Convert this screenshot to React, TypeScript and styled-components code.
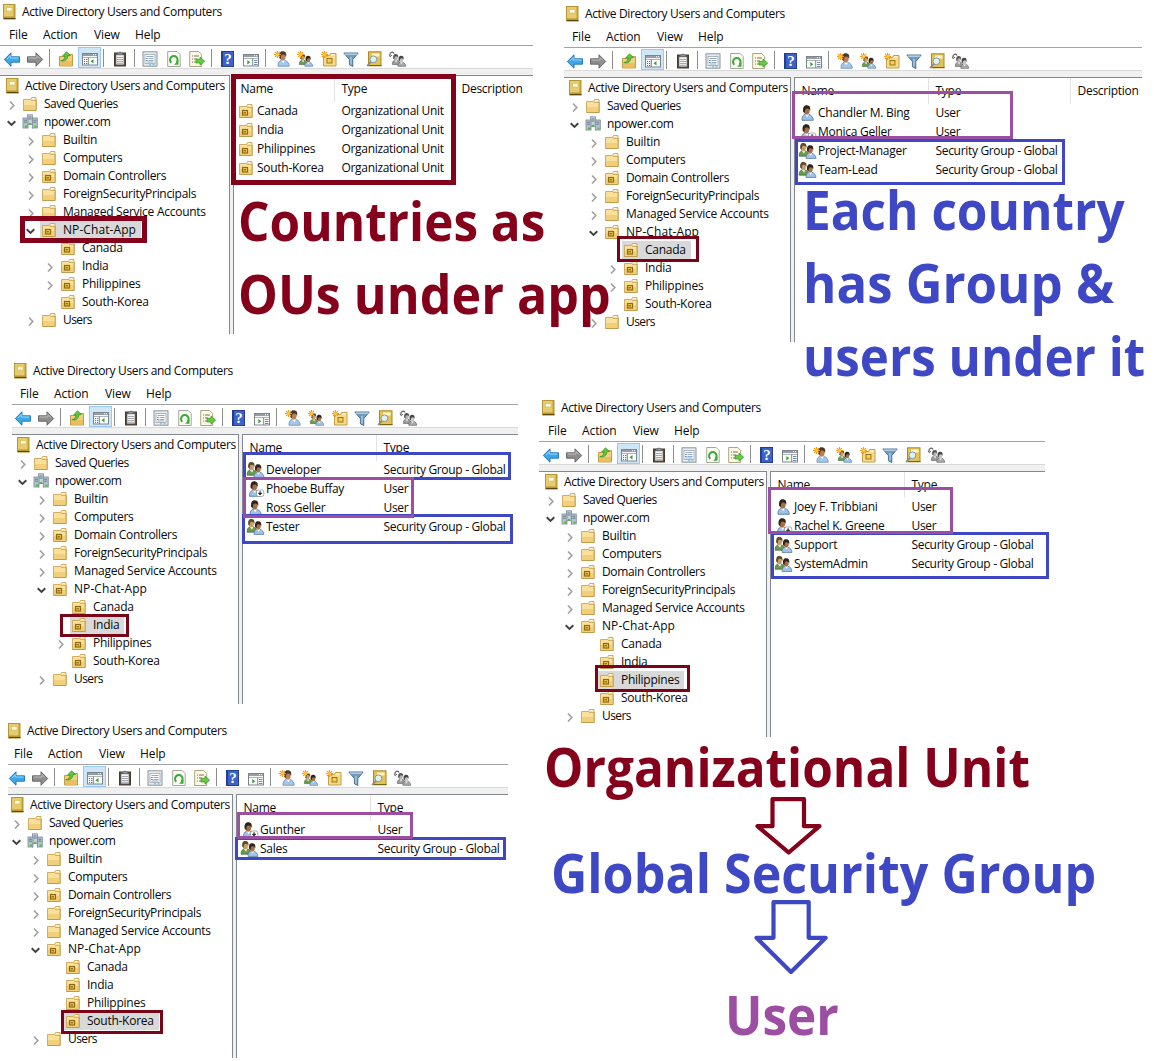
import React, { useLayoutEffect, useRef, useState } from "react";
import styled, { createGlobalStyle } from "styled-components";

const MAROON = "#85001a";
const DARK_RED = "#7a0519";
const BLUE = "#3f48c4";
const PURPLE = "#9c4fa2";

const GlobalStyle = createGlobalStyle`
  body {
    margin: 0;
    background: #ffffff;
  }
`;

const Board = styled.main`
  position: relative;
  width: 1154px;
  height: 1061px;
  overflow: hidden;
  background: #ffffff;
  color: #080808;
  font-family: "Open Sans", "Noto Sans", sans-serif;
  font-size: 12px;
  letter-spacing: -0.27px;
`;

/* ---------- icons ---------- */

const Svg = styled.svg<{ $w?: number; $h?: number }>`
  display: block;
  flex: none;
  overflow: visible;
  width: ${(p) => p.$w ?? 16}px;
  height: ${(p) => p.$h ?? 16}px;
`;

const BookIcon = () => (
  <Svg $w={14} $h={16} viewBox="0 0 14 16">
    <rect x="0.5" y="0.5" width="11.500" height="14.500" fill="#c9a227" stroke="#b5973a" />
    <rect x="1" y="1" width="9.500" height="12" fill="#e6cc70" />
    <rect x="3.500" y="3.500" width="5.500" height="3.500" fill="#fffbe4" stroke="#d8b850" strokeWidth=".6" />
    <path d="M1 14.500h11.500" stroke="#5d4810" strokeWidth="1.200" />
    <path d="M1 13h10" stroke="#b7952a" />
  </Svg>
);

const FolderShape = () => (
  <>
    <path d="M1.500 3.500h7l1-2h4.500v13h-12.500z" fill="#f3d387" stroke="#cda75a" strokeWidth=".9" />
    <path d="M2 4h7.500l1-1.300h3v11H2z" fill="#fae09a" />
    <path d="M2 9h12v5H2z" fill="#f2cf7b" />
    <path d="M9.800 2.500h2.800" stroke="#fff" />
    <path d="M9 4.500h5" stroke="#c9a458" strokeWidth=".8" />
    <path d="M1.500 14.500H14.200V4" fill="none" stroke="#c0974a" strokeWidth=".9" />
  </>
);

const FolderIcon = () => (
  <Svg viewBox="0 0 16 16">
    <FolderShape />
  </Svg>
);

const OuIcon = () => (
  <Svg viewBox="0 0 16 16">
    <FolderShape />
    <rect x="4.500" y="7.500" width="5" height="4.500" fill="#f0c94c" stroke="#8d6a14" strokeWidth="1.200" />
    <path d="M5.500 9.800h2.500" stroke="#80600f" strokeWidth="1.200" />
  </Svg>
);

const DomainIcon = () => (
  <Svg viewBox="0 0 16 16">
    <rect x="5.500" y="0.800" width="5" height="9.500" fill="#c3d0d8" stroke="#7a8d98" strokeWidth=".8" />
    <rect x="1" y="4" width="5" height="10" fill="#b4c4ce" stroke="#788b97" strokeWidth=".8" />
    <rect x="10.300" y="4" width="5" height="10" fill="#b4c4ce" stroke="#788b97" strokeWidth=".8" />
    <path d="M6.500 3h3M6.500 5h3M2 6.200h3M2 8.200h3M11.300 6.200h3M11.300 8.200h3" stroke="#5f7380" strokeWidth=".9" />
    <path d="M5.500 14.500v-4h5v4" fill="none" stroke="#8a9aa3" />
    <path d="M3 11.500h2v2H3zM7 9h2v2H7zM12.500 11.500h2v2h-2z" fill="#4dbd3a" />
  </Svg>
);

const Person = ({ skin = "#a56f45", hair = "#30231b", body = "#9fc3e6", edge = "#4d7298" }) => (
  <>
    <path d="M3 15.300c-.3-3 1-5.500 3-6h3.500c3 .6 5 3.500 4.700 6z" fill={body} stroke={edge} strokeWidth=".8" />
    <path d="M6 9.300l2.500 3 1.300-3z" fill="#f5f9fd" />
    <ellipse cx="7.700" cy="5.800" rx="2.900" ry="3.800" fill={skin} />
    <path d="M4.200 7C3.500 2.500 5 .3 7.500.3c3.200 0 4.300 2 3.600 6-.5-1.800-1.200-2.600-2.700-2.700-1.800-.1-2.600 1-2.500 4.400z" fill={hair} />
  </>
);

const UserIcon = () => (
  <Svg viewBox="0 0 16 16">
    <g transform="translate(-1 0)">
      <Person />
    </g>
  </Svg>
);

const DisabledUserIcon = () => (
  <Svg viewBox="0 0 16 16">
    <g transform="translate(-1.500 0)">
      <Person />
    </g>
    <rect x="8.500" y="9" width="7.300" height="6.500" rx="2" fill="#fff" stroke="#8c99a6" strokeWidth=".8" />
    <path d="M12.100 10v3M10.500 12.200l1.600 1.800 1.600-1.800z" fill="#222" stroke="#222" strokeWidth=".9" />
  </Svg>
);

const GroupShape = ({ gray = false }) => (
  <>
    <g transform="translate(-3.400 -.3) scale(.88)">
      {gray ? (
        <Person skin="#b5b5b5" hair="#555" body="#9c9c9c" edge="#555" />
      ) : (
        <Person skin="#c99c6c" hair="#5d4c25" body="#6a9c4c" edge="#36602a" />
      )}
    </g>
    <g transform="translate(3.400 2) scale(.88)">
      {gray ? <Person skin="#c5c5c5" hair="#444" body="#a9a9a9" edge="#555" /> : <Person />}
    </g>
  </>
);

const GroupIcon = () => (
  <Svg viewBox="0 0 16 16">
    <GroupShape />
  </Svg>
);

const Spark = () => (
  <>
    <path d="M3.500 0v7M0 3.500h7M1 1l5 5M6 1L1 6" stroke="#f0a020" strokeWidth="1.100" />
    <circle cx="3.500" cy="3.500" r="1.500" fill="#ffc63c" />
  </>
);

const NewUserIcon = () => (
  <Svg viewBox="0 0 16 16">
    <g transform="translate(1 0)">
      <Person skin="#b98052" hair="#4a382b" body="#a4c6e8" edge="#6a90b8" />
    </g>
    <Spark />
  </Svg>
);

const NewGroupIcon = () => (
  <Svg viewBox="0 0 16 16">
    <g transform="translate(3 3) scale(.8)">
      <GroupShape />
    </g>
    <Spark />
  </Svg>
);

const NewOuIcon = () => (
  <Svg viewBox="0 0 16 16">
    <path d="M2.500 4.500h6l1-2h5.500v12.500h-12.500z" fill="#f6d98b" stroke="#c69f45" />
    <rect x="6" y="7.500" width="5" height="4.500" fill="#f4d04a" stroke="#9a7620" />
    <path d="M10 4h4" stroke="#fff" />
    <Spark />
  </Svg>
);

const BackIcon = () => (
  <Svg viewBox="0 0 16 16">
    <path d="M.3 8.500L7 1.800v4h8.500v5.400H7v4z" fill="#3da7e8" stroke="#1b70b4" strokeWidth=".9" strokeLinejoin="round" />
    <path d="M3 8L6.300 4.500v2.500h8.200" fill="none" stroke="#96d8fb" />
  </Svg>
);

const ForwardIcon = () => (
  <Svg viewBox="0 0 16 16">
    <path d="M15.700 8.500L9 1.800v4H.5v5.400H9v4z" fill="#8e8e8e" stroke="#5e5e5e" strokeWidth=".9" strokeLinejoin="round" />
    <path d="M1.500 7H10V4.500L13 7.500" fill="none" stroke="#bdbdbd" />
  </Svg>
);

const UpFolderIcon = () => (
  <Svg viewBox="0 0 16 16">
    <path d="M1.500 5.500h7l1-2h5v11.500h-13z" fill="#f2d07e" stroke="#c39d45" />
    <path d="M2 10h12v4.500H2z" fill="#e9bf62" />
    <path d="M2.800 9.500C5.500 9.500 6.800 7.800 7 5H4.600L8.500.8l4 3.700-2.600.2C9.800 8.500 6.500 11 2.800 9.500z" fill="#5cc63c" stroke="#338f1f" strokeWidth=".7" />
  </Svg>
);

const PaneShape = () => (
  <>
    <rect x=".5" y="2.500" width="15" height="11.500" fill="#fff" stroke="#7d858c" />
    <path d="M1 4h14" stroke="#969da3" strokeWidth="2" />
    <path d="M11 3.700h1M13 3.700h1" stroke="#fff" />
    <path d="M1 6.400h14" stroke="#8e969c" strokeWidth=".8" />
  </>
);

const TreePaneIcon = () => (
  <Svg viewBox="0 -1 16 16">
    <PaneShape />
    <path d="M6.300 6.500V14" stroke="#7d858c" />
    <path d="M2 8.500h1M2 10.500h1M2 12.500h1M4 8.500h1.300M4 10.500h1.300M4 12.500h1.300" stroke="#5576a0" />
    <path d="M11.500 8v4.600L8.500 10.300z" fill="#35a332" />
  </Svg>
);

const ActionPaneIcon = () => (
  <Svg viewBox="0 -1 16 16">
    <PaneShape />
    <path d="M9.700 6.500V14" stroke="#7d858c" />
    <path d="M11 8.500h3.500M11 10.500h3.500M11 12.500h3.500" stroke="#6c8bb0" />
    <path d="M4.300 8v4.600l3-2.300z" fill="#35a332" />
  </Svg>
);

const ClipboardIcon = () => (
  <Svg viewBox="0 0 16 16">
    <rect x="2.500" y="2" width="11" height="13" fill="#5b5048" stroke="#463c36" />
    <rect x="4.300" y="4" width="7.400" height="9.500" fill="#f4f4f4" />
    <path d="M5 6.500h6M5 8.500h6M5 10.500h6M5 12.300h6" stroke="#9aa0a4" strokeWidth=".9" />
    <path d="M5 3.800V2h1.800c.3-1.500 2.100-1.500 2.400 0H11v1.800z" fill="#8f969b" stroke="#55595d" strokeWidth=".6" />
  </Svg>
);

const PropertiesIcon = () => (
  <Svg viewBox="0 0 16 16">
    <rect x="1" y=".8" width="14" height="14.400" fill="#e8ecef" stroke="#8b949b" />
    <rect x="3" y="3.500" width="10" height="9" fill="#fff" stroke="#9aa8b3" strokeWidth=".8" />
    <path d="M4.500 5.500h7M6.500 7.500h5M6.500 9.500h5M4.500 11h7" stroke="#7393b5" strokeWidth=".8" />
    <path d="M4.300 7.500h1.200M4.300 9.500h1.200" stroke="#2f5c95" />
    <path d="M7 13.800h2M10.500 13.800h2" stroke="#55b9df" />
  </Svg>
);

const RefreshIcon = () => (
  <Svg viewBox="0 0 16 16">
    <path d="M1.700.5h9.500l3 3v12H1.700z" fill="#fcfcf7" stroke="#9c9c90" strokeWidth=".9" />
    <path d="M10.300 11.700a3.800 3.800 0 1 0-5 0" fill="none" stroke="#3caa37" strokeWidth="2" />
    <path d="M12.500 9.500v4.300H8z" fill="#3caa37" />
  </Svg>
);

const ExportIcon = () => (
  <Svg viewBox="0 0 16 16">
    <path d="M.7.500h9l3 3v12H.7z" fill="#fbf8e6" stroke="#a39b78" strokeWidth=".9" />
    <path d="M3 5h1M3 8h1M3 11h1M5 5h5M5 8h3M5 11h3" stroke="#77745f" />
    <path d="M7 8.300h4V6l4.700 4.200L11 14.200V12H7z" fill="#63cc42" stroke="#37951f" strokeWidth=".7" />
  </Svg>
);

const HelpBook = styled.span`
  display: flex;
  align-items: center;
  justify-content: center;
  width: 13px;
  height: 16px;
  margin: 0 1px 0 2px;
  box-sizing: border-box;
  border: 1px solid #24408c;
  border-left-width: 2px;
  background: #3d62cc;
  color: #fff;
  font: bold 15px/14px "Liberation Serif", serif;
  letter-spacing: 0;
`;

const FunnelIcon = () => (
  <Svg viewBox="0 0 16 16">
    <path d="M.8 2h14.400L9.800 8.500v7l-3.400-1.700V8.500z" fill="#6f9cc0" stroke="#44698a" strokeWidth=".9" />
    <path d="M1.500 2.400h13l-1 1.300h-11z" fill="#c6dcec" />
    <path d="M8 6v7.500" stroke="#b8d4e8" strokeWidth="1.200" />
  </Svg>
);

const FindIcon = () => (
  <Svg viewBox="0 0 16 16">
    <rect x="2.500" y=".8" width="12.500" height="14" fill="#e3c353" stroke="#ab8a22" />
    <rect x="6" y="2.500" width="7.500" height="3" fill="#fff6ce" />
    <path d="M3 14.500h12.500" stroke="#7f6310" />
    <circle cx="7.400" cy="8.300" r="3.400" fill="#e0f0f8" stroke="#8198a6" />
    <path d="M5 10.800L1 15" stroke="#8b8b8b" strokeWidth="1.800" />
  </Svg>
);

const MembersIcon = () => (
  <Svg viewBox="0 0 16 16">
    <g transform="translate(4 3) scale(.8)">
      <GroupShape gray />
    </g>
    <path d="M1 4.500C.5 1 4 0 5 2.500" fill="none" stroke="#555" strokeWidth="1.100" />
    <path d="M.2 3.500l1 2.300L3 4" fill="none" stroke="#555" strokeWidth=".9" />
  </Svg>
);

const Chevron = ({ open }: { open?: boolean }) => (
  <Svg $w={11} $h={11} viewBox="0 -1 11 11">
    {open ? (
      <path d="M1.700 3.300L5.500 7l3.800-3.700" fill="none" stroke="#404040" strokeWidth="1.900" />
    ) : (
      <path d="M4 1.500l3.800 4L4 9.500" fill="none" stroke="#a2a2a2" strokeWidth="1.700" />
    )}
  </Svg>
);

/* ---------- console window ---------- */

const ConsoleFrame = styled.section<{ $x: number; $y: number; $w: number; $h: number }>`
  position: absolute;
  left: ${(p) => p.$x}px;
  top: ${(p) => p.$y}px;
  width: ${(p) => p.$w}px;
  height: ${(p) => p.$h}px;
  display: flex;
  flex-direction: column;
  white-space: nowrap;
`;

const TitleBar = styled.header`
  display: flex;
  align-items: center;
  gap: 5px;
  height: 24px;
  padding-left: 3px;
  flex: none;
`;

const ConsoleTitle = styled.span<{ $indent?: number }>`
  padding-left: ${(p) => p.$indent ?? 0}px;
  padding-bottom: 1px;
  letter-spacing: -0.36px;
`;

const MenuBar = styled.nav`
  display: grid;
  grid-template-columns: 34px 51px 41px 40px;
  align-items: center;
  box-sizing: border-box;
  height: 21px;
  padding: 0 0 1px 9px;
  flex: none;
  letter-spacing: -0.1px;
`;

const ToolBar = styled.div<{ $inset: number }>`
  display: flex;
  align-items: center;
  box-sizing: border-box;
  height: 24px;
  flex: none;
  margin-left: ${(p) => p.$inset}px;
  padding: 1px 0 0 ${(p) => 4 - p.$inset}px;
  border-top: 1px solid #a3a3a3;
  border-bottom: 1px solid #d9d9d9;
`;

const Tool = styled.span<{ $gap: number }>`
  display: flex;
  width: 16px;
  margin: 2px 0 0 ${(p) => p.$gap}px;
  flex: none;
`;

const ActiveTool = styled.span`
  display: flex;
  align-items: center;
  justify-content: center;
  box-sizing: border-box;
  width: 23px;
  height: 21px;
  padding-top: 1px;
  margin-left: 4px;
  border: 1px solid #99cbf2;
  background: #cfe6f9;
  flex: none;
`;

const Divider = styled.i<{ $gap: number }>`
  width: 1px;
  height: 18px;
  margin: 1px 0 0 ${(p) => p.$gap}px;
  background: #8d8d8d;
  flex: none;
`;

const Body = styled.div<{ $inset: number }>`
  display: flex;
  flex: 1;
  min-height: 0;
  margin-left: ${(p) => p.$inset}px;
  border-top: 6px solid #f0f0f0;
`;

const TreePane = styled.div<{ $w: number }>`
  box-sizing: border-box;
  width: ${(p) => p.$w}px;
  flex: none;
  padding-top: 1px;
  border-top: 1px solid #828790;
  border-right: 1px solid #828790;
`;

const Splitter = styled.div`
  width: 3px;
  flex: none;
  background: #f0f0f0;
`;

const ListPane = styled.div`
  flex: 1;
  min-width: 0;
  border-top: 1px solid #828790;
  border-left: 1px solid #828790;
`;

const TreeRow = styled.div<{ $pad: number }>`
  display: flex;
  align-items: center;
  height: 18px;
  padding-left: ${(p) => p.$pad}px;
`;

const ExpanderSlot = styled.span`
  width: 15px;
  flex: none;
`;

const NodeBox = styled.span<{ $selected?: boolean }>`
  display: flex;
  align-items: center;
  gap: 6px;
  height: 18px;
  padding: 0 5px 0 1px;
  background: ${(p) => (p.$selected ? "#d9d9d9" : "transparent")};
`;

const NodeLabel = styled.span<{ $tracking?: number }>`
  padding-bottom: 1px;
  letter-spacing: ${(p) => p.$tracking ?? -0.26}px;
`;

const ListHeader = styled.div<{ $cols: string }>`
  display: grid;
  grid-template-columns: ${(p) => p.$cols};
  height: 25px;
  line-height: 26px;
`;

const HeaderCell = styled.span<{ $last?: boolean }>`
  padding-left: 6.5px;
  border-right: ${(p) => (p.$last ? "0" : "1px solid #e2e2e2")};
`;

const ListRow = styled.div<{ $cols: string }>`
  display: grid;
  grid-template-columns: ${(p) => p.$cols};
  align-items: center;
  height: 19px;
`;

const NameCell = styled.span<{ $tight?: boolean }>`
  display: flex;
  align-items: center;
  gap: ${(p) => (p.$tight ? 2 : 3)}px;
  padding-left: ${(p) => (p.$tight ? 5 : 4)}px;
`;

const TypeCell = styled.span`
  padding-left: 6.5px;
  letter-spacing: -0.32px;
`;

type Kind = "ou" | "user" | "disabled" | "group";
type Entry = [Kind, string];

interface ConsoleData {
  x: number;
  y: number;
  w: number;
  h: number;
  inset: number;
  tree: number;
  nameCol: number;
  typeCol: number;
  description?: boolean;
  selected: string;
  expandable: string[];
  entries: Entry[];
}

const typeNames: Record<Kind, string> = {
  ou: "Organizational Unit",
  user: "User",
  disabled: "User",
  group: "Security Group - Global",
};

const kindIcons: Record<Kind, React.ReactNode> = {
  ou: <OuIcon />,
  user: <UserIcon />,
  disabled: <DisabledUserIcon />,
  group: <GroupIcon />,
};

type Node = {
  label: string;
  level: number;
  icon: React.ReactNode;
  state?: "open" | "closed";
  tracking?: number;
};

const buildTree = (expandable: string[]): Node[] => [
  { label: "Saved Queries", level: 0, icon: <FolderIcon />, state: "closed", tracking: -0.5 },
  { label: "npower.com", level: 0, icon: <DomainIcon />, state: "open", tracking: -0.35 },
  { label: "Builtin", level: 1, icon: <FolderIcon />, state: "closed" },
  { label: "Computers", level: 1, icon: <FolderIcon />, state: "closed", tracking: -0.3 },
  { label: "Domain Controllers", level: 1, icon: <OuIcon />, state: "closed", tracking: -0.34 },
  { label: "ForeignSecurityPrincipals", level: 1, icon: <FolderIcon />, state: "closed", tracking: -0.3 },
  { label: "Managed Service Accounts", level: 1, icon: <FolderIcon />, state: "closed" },
  { label: "NP-Chat-App", level: 1, icon: <OuIcon />, state: "open", tracking: 0.08 },
  ...["Canada", "India", "Philippines", "South-Korea"].map(
    (label): Node => ({
      label,
      level: 2,
      icon: <OuIcon />,
      state: expandable.includes(label) ? "closed" : undefined,
    })
  ),
  { label: "Users", level: 1, icon: <FolderIcon />, state: "closed", tracking: -0.6 },
];

const Console = ({ data }: { data: ConsoleData }) => {
  const cols = `${data.nameCol}px ${data.typeCol}px 1fr`;
  return (
    <ConsoleFrame $x={data.x} $y={data.y} $w={data.w} $h={data.h}>
      <TitleBar>
        <BookIcon />
        <ConsoleTitle>Active Directory Users and Computers</ConsoleTitle>
      </TitleBar>
      <MenuBar>
        <span>File</span>
        <span>Action</span>
        <span>View</span>
        <span>Help</span>
      </MenuBar>
      <ToolBar $inset={data.inset}>
        <Tool $gap={0}><BackIcon /></Tool>
        <Tool $gap={7}><ForwardIcon /></Tool>
        <Divider $gap={6} />
        <Tool $gap={8}><UpFolderIcon /></Tool>
        <ActiveTool><TreePaneIcon /></ActiveTool>
        <Divider $gap={2} />
        <Tool $gap={8}><ClipboardIcon /></Tool>
        <Divider $gap={6} />
        <Tool $gap={7}><PropertiesIcon /></Tool>
        <Tool $gap={8}><RefreshIcon /></Tool>
        <Tool $gap={7}><ExportIcon /></Tool>
        <Divider $gap={6} />
        <Tool $gap={7}><HelpBook>?</HelpBook></Tool>
        <Tool $gap={8}><ActionPaneIcon /></Tool>
        <Divider $gap={6} />
        <Tool $gap={8}><NewUserIcon /></Tool>
        <Tool $gap={7}><NewGroupIcon /></Tool>
        <Tool $gap={8}><NewOuIcon /></Tool>
        <Tool $gap={6}><FunnelIcon /></Tool>
        <Tool $gap={7}><FindIcon /></Tool>
        <Tool $gap={7}><MembersIcon /></Tool>
      </ToolBar>
      <Body $inset={data.inset}>
        <TreePane $w={data.tree - data.inset}>
          <TreeRow $pad={6 - data.inset}>
            <BookIcon />
            <ConsoleTitle $indent={5}>Active Directory Users and Computers</ConsoleTitle>
          </TreeRow>
          {buildTree(data.expandable).map((node) => (
            <TreeRow key={node.label} $pad={6 - data.inset + node.level * 19}>
              <ExpanderSlot>{node.state && <Chevron open={node.state === "open"} />}</ExpanderSlot>
              <NodeBox $selected={node.label === data.selected}>
                {node.icon}
                <NodeLabel $tracking={node.tracking}>{node.label}</NodeLabel>
              </NodeBox>
            </TreeRow>
          ))}
        </TreePane>
        <Splitter />
        <ListPane>
          <ListHeader $cols={cols}>
            <HeaderCell>Name</HeaderCell>
            <HeaderCell $last={!data.description}>Type</HeaderCell>
            {data.description && <HeaderCell $last>Description</HeaderCell>}
          </ListHeader>
          {data.entries.map(([kind, name]) => (
            <ListRow key={name} $cols={cols}>
              <NameCell $tight={kind !== "ou"}>
                {kindIcons[kind]}
                <span>{name}</span>
              </NameCell>
              <TypeCell>{typeNames[kind]}</TypeCell>
            </ListRow>
          ))}
        </ListPane>
      </Body>
    </ConsoleFrame>
  );
};

const consoles: ConsoleData[] = [
  {
    x: 0, y: 0, w: 533, h: 334, inset: 0, tree: 230, nameCol: 101, typeCol: 120,
    description: true, selected: "NP-Chat-App", expandable: ["India", "Philippines"],
    entries: [["ou", "Canada"], ["ou", "India"], ["ou", "Philippines"], ["ou", "South-Korea"]],
  },
  {
    x: 563, y: 2, w: 579, h: 340, inset: 1, tree: 228, nameCol: 134, typeCol: 142,
    description: true, selected: "Canada", expandable: ["India", "Philippines"],
    entries: [["user", "Chandler M. Bing"], ["disabled", "Monica Geller"], ["group", "Project-Manager"], ["group", "Team-Lead"]],
  },
  {
    x: 11, y: 359, w: 507, h: 345, inset: 1, tree: 228, nameCol: 134, typeCol: 130,
    selected: "India", expandable: ["Philippines"],
    entries: [["group", "Developer"], ["disabled", "Phoebe Buffay"], ["user", "Ross Geller"], ["group", "Tester"]],
  },
  {
    x: 539, y: 396, w: 506, h: 341, inset: 0, tree: 228, nameCol: 134, typeCol: 130,
    selected: "Philippines", expandable: [],
    entries: [["user", "Joey F. Tribbiani"], ["disabled", "Rachel K. Greene"], ["group", "Support"], ["group", "SystemAdmin"]],
  },
  {
    x: 5, y: 719, w: 503, h: 339, inset: 3, tree: 228, nameCol: 134, typeCol: 130,
    selected: "South-Korea", expandable: [],
    entries: [["disabled", "Gunther"], ["group", "Sales"]],
  },
];

/* ---------- annotations ---------- */

const Outline = styled.div<{ $box: number[]; $color: string; $thick?: number }>`
  position: absolute;
  box-sizing: border-box;
  left: ${(p) => p.$box[0]}px;
  top: ${(p) => p.$box[1]}px;
  width: ${(p) => p.$box[2] - p.$box[0]}px;
  height: ${(p) => p.$box[3] - p.$box[1]}px;
  border: ${(p) => p.$thick ?? 3}px solid ${(p) => p.$color};
`;

const outlines: { box: number[]; color: string; thick?: number }[] = [
  { box: [231, 74, 456, 185], color: MAROON, thick: 5 },
  { box: [20, 216, 147, 243], color: MAROON, thick: 5 },
  { box: [617, 236, 699, 262], color: DARK_RED },
  { box: [795, 139, 1065, 185], color: BLUE },
  { box: [792, 91, 1013, 139], color: PURPLE },
  { box: [243, 452, 511, 480], color: BLUE },
  { box: [242, 514, 513, 544], color: BLUE },
  { box: [243, 477, 414, 518], color: PURPLE },
  { box: [60, 614, 129, 637], color: DARK_RED },
  { box: [771, 532, 1049, 579], color: BLUE },
  { box: [768, 487, 953, 534], color: PURPLE },
  { box: [595, 665, 690, 692], color: DARK_RED },
  { box: [235, 837, 506, 860], color: BLUE },
  { box: [237, 812, 413, 839], color: PURPLE },
  { box: [61, 1010, 163, 1034], color: DARK_RED },
];

const Caption = styled.div<{ $x: number; $baseline: number; $color: string }>`
  position: absolute;
  left: ${(p) => p.$x}px;
  top: ${(p) => p.$baseline - 49}px;
  color: ${(p) => p.$color};
  font: 700 53px/60px "Open Sans", "Noto Sans", sans-serif;
  font-variant-ligatures: none;
  letter-spacing: 0;
  white-space: nowrap;
  transform-origin: 0 0;
`;

/* Oversized caption squeezed horizontally to the width it is given. */
const FittedCaption = (props: { x: number; right: number; baseline: number; color: string; text: string }) => {
  const ref = useRef<HTMLDivElement>(null);
  const [scale, setScale] = useState(1);
  useLayoutEffect(() => {
    const fit = () => ref.current && setScale((props.right - props.x) / ref.current.offsetWidth);
    fit();
    document.fonts?.ready.then(fit);
  }, [props.right, props.x]);
  return (
    <Caption
      ref={ref}
      $x={props.x}
      $baseline={props.baseline}
      $color={props.color}
      style={{ transform: `scaleX(${scale})` }}
    >
      {props.text}
    </Caption>
  );
};

const captions = [
  { text: "Countries as", x: 238, right: 545, baseline: 240, color: MAROON },
  { text: "OUs under app", x: 238, right: 611, baseline: 313, color: MAROON },
  { text: "Each country", x: 803, right: 1125, baseline: 229, color: BLUE },
  { text: "has Group &", x: 803, right: 1114, baseline: 302, color: BLUE },
  { text: "users under it", x: 803, right: 1145, baseline: 375, color: BLUE },
  { text: "Organizational Unit", x: 544, right: 1030, baseline: 786, color: MAROON },
  { text: "Global Security Group", x: 551, right: 1096, baseline: 892, color: BLUE },
  { text: "User", x: 725, right: 839, baseline: 1034, color: PURPLE },
];

const ArrowLayer = styled.svg`
  position: absolute;
  left: 745px;
  top: 790px;
  width: 90px;
  height: 190px;
`;

export default function App() {
  return (
    <>
      <GlobalStyle />
      <Board>
        {consoles.map((data) => (
          <Console key={data.selected} data={data} />
        ))}
        {outlines.map((o) => (
          <Outline key={o.box.join()} $box={o.box} $color={o.color} $thick={o.thick} />
        ))}
        {captions.map((c) => (
          <FittedCaption key={c.text} {...c} />
        ))}
        <ArrowLayer viewBox="745 790 90 190" fill="none" strokeWidth="4.200" strokeLinejoin="round">
          <path d="M772.500 799.200h31.500v27h15.500L788.700 852.500 757.500 826.200h15z" stroke={MAROON} />
          <path d="M773.500 902.200h35.200v35.600h17L791 972 756.500 937.800h17z" stroke={BLUE} />
        </ArrowLayer>
      </Board>
    </>
  );
}
